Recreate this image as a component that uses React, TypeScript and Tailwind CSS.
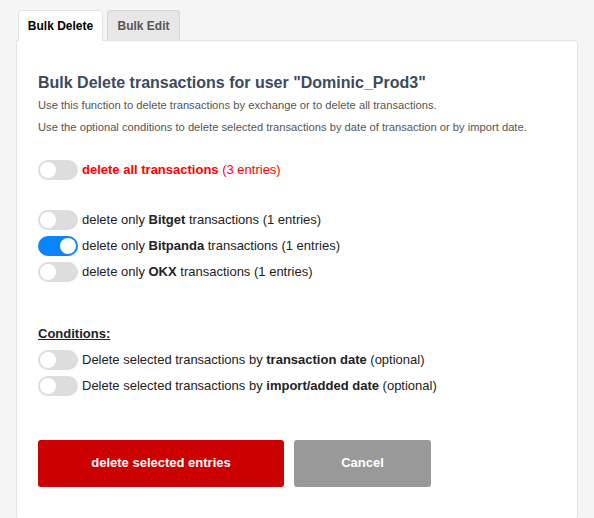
import { useState } from "react";

function Toggle({ on, onClick }: { on: boolean; onClick: () => void }) {
  return (
    <button
      type="button"
      onClick={onClick}
      className={`relative h-[20px] w-[40px] shrink-0 rounded-full ${on ? "bg-[#0a84ff]" : "bg-[#dddddd]"}`}
    >
      <span
        className={`absolute top-[2px] h-[16px] w-[16px] rounded-full bg-white ${on ? "left-[22px]" : "left-[2px]"}`}
      />
    </button>
  );
}

export default function App() {
  const [all, setAll] = useState(false);
  const [ex, setEx] = useState<Record<string, boolean>>({ Bitget: false, Bitpanda: true, OKX: false });
  const [byTx, setByTx] = useState(false);
  const [byImport, setByImport] = useState(false);

  return (
    <div className="min-h-screen bg-[#f5f5f6] pl-[16px] pr-[16px] pt-[10px] font-['Liberation_Sans',Arial,sans-serif]">
      <div className="flex gap-[4px] pl-[2px]">
        <div className="relative z-10 -mb-px flex h-[31px] w-[85px] items-center justify-center rounded-t-[4px] border border-b-0 border-[#e3e3e3] bg-white text-[12px] font-bold text-black">
          Bulk Delete
        </div>
        <div className="flex h-[30px] w-[73px] items-center justify-center rounded-t-[4px] border border-b-0 border-[#d6d6d6] bg-[#e7e7e7] text-[12px] font-bold text-[#555]">
          Bulk Edit
        </div>
      </div>
      <div className="min-h-[480px] rounded-b-[4px] rounded-tr-[4px] border border-[#e3e3e3] bg-white pl-[21px] pr-[20px] pt-[32px]">
        <h1 className="text-[16px] font-bold leading-[20px] text-[#3d4a5c]">
          Bulk Delete transactions for user "Dominic_Prod3"
        </h1>
        <p className="mt-[1px] text-[11.2px] leading-[22px] text-[#555]">
          Use this function to delete transactions by exchange or to delete all transactions.
        </p>
        <p className="text-[11.2px] leading-[22px] text-[#555]">
          Use the optional conditions to delete selected transactions by date of transaction or by import date.
        </p>

        <div className="mt-[22px] flex items-center gap-[4px] text-[13px] text-[#ff0000]">
          <Toggle on={all} onClick={() => setAll(!all)} />
          <span>
            <b>delete all transactions</b> (3 entries)
          </span>
        </div>

        <div className="mt-[30px] flex flex-col gap-[6px] text-[13px] text-[#222]">
          {["Bitget", "Bitpanda", "OKX"].map((n) => (
            <div key={n} className="flex items-center gap-[4px]">
              <Toggle on={ex[n]} onClick={() => setEx({ ...ex, [n]: !ex[n] })} />
              <span>
                delete only <b>{n}</b> transactions (1 entries)
              </span>
            </div>
          ))}
        </div>

        <div className="mt-[42px] text-[13px] font-bold text-[#222] underline">Conditions:</div>
        <div className="mt-[6px] flex flex-col gap-[6px] text-[13px] text-[#222]">
          <div className="flex items-center gap-[4px]">
            <Toggle on={byTx} onClick={() => setByTx(!byTx)} />
            <span>
              Delete selected transactions by <b>transaction date</b> (optional)
            </span>
          </div>
          <div className="flex items-center gap-[4px]">
            <Toggle on={byImport} onClick={() => setByImport(!byImport)} />
            <span>
              Delete selected transactions by <b>import/added date</b> (optional)
            </span>
          </div>
        </div>

        <div className="mt-[44px] flex gap-[10px]">
          <button className="h-[47px] w-[246px] rounded-[3px] bg-[#cc0000] text-[13px] font-bold text-white">
            delete selected entries
          </button>
          <button className="h-[47px] w-[137px] rounded-[3px] bg-[#999999] text-[13px] font-bold text-white">
            Cancel
          </button>
        </div>
      </div>
    </div>
  );
}
